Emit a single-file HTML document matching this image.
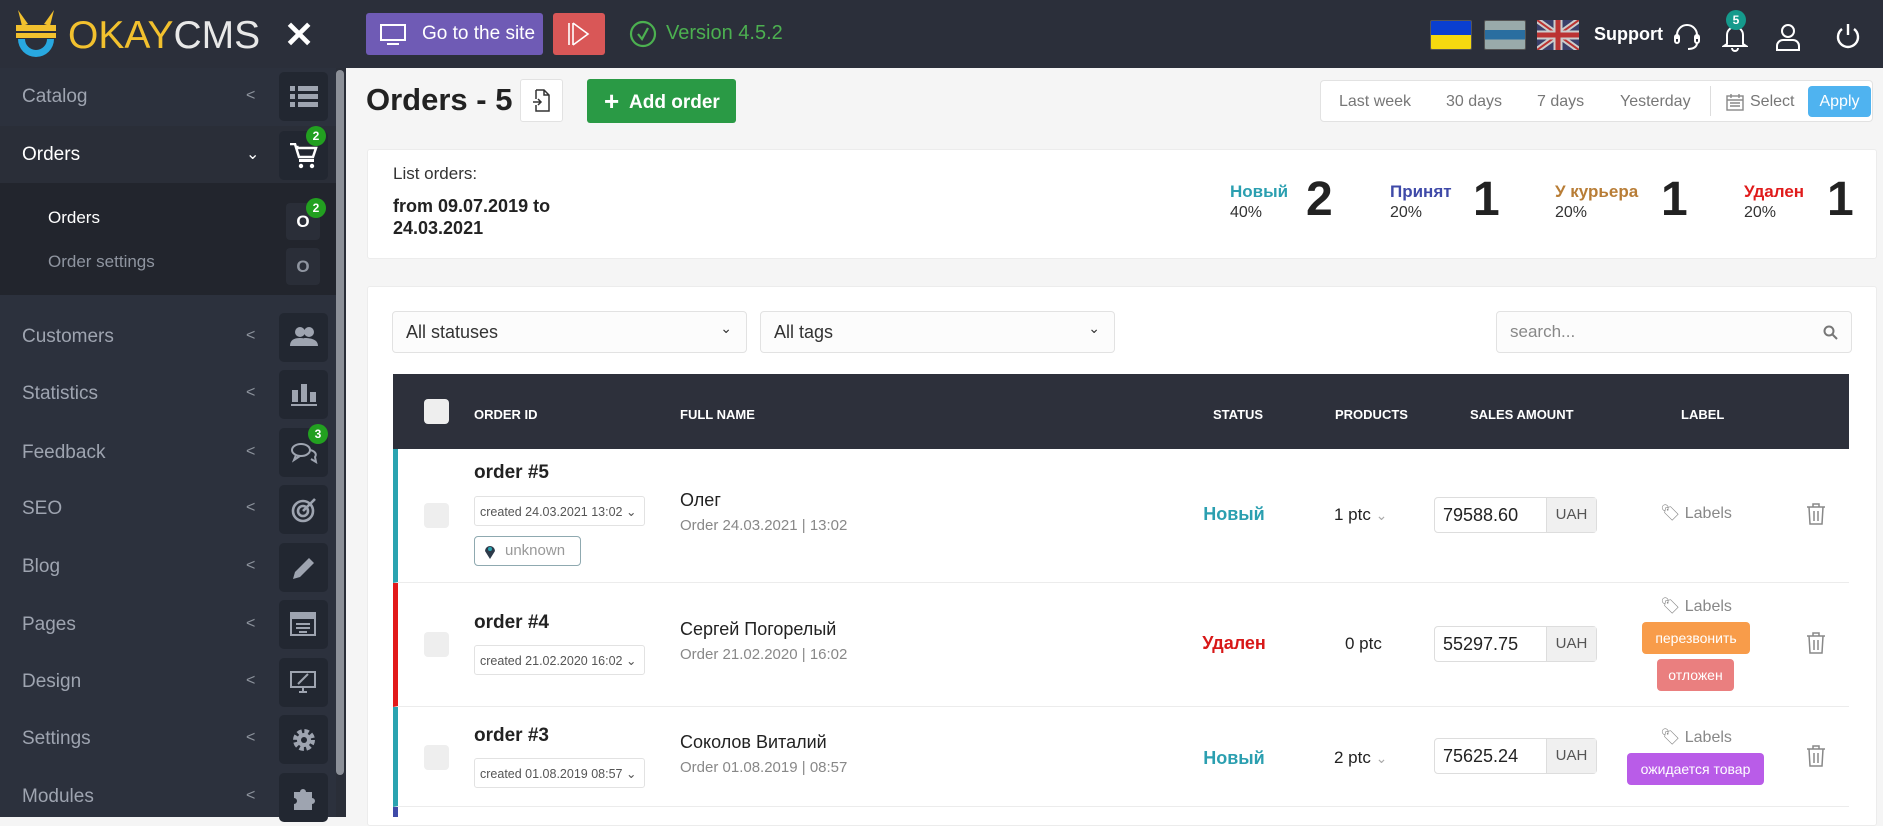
<!DOCTYPE html>
<html><head><meta charset="utf-8"><style>
*{box-sizing:border-box;margin:0;padding:0}
body{width:1883px;height:817px;overflow:hidden;background:#f5f5f5;font-family:"Liberation Sans","Noto Sans CJK SC",sans-serif;position:relative;color:#222}
.a{position:absolute}
.hdr{left:0;top:0;width:1883px;height:68px;background:#2b2f3a}
.sb{left:0;top:68px;width:346px;height:749px;background:#2c313d}
.nav{position:absolute;left:22px;font-size:19px;color:#9ea4b0}
.chev{position:absolute;left:246px;color:#8c929c;font-size:16px}
.ib{position:absolute;left:279px;width:49px;height:49px;background:#222731;border-radius:5px}
.badge{position:absolute;width:20px;height:20px;border-radius:50%;background:#22a020;color:#fff;font-size:12px;font-weight:bold;text-align:center;line-height:20px}
.card{background:#fff;border:1px solid #ececec;border-radius:3px}
.sel{background:#fcfcfc;border:1px solid #e2e2e2;border-radius:4px;font-size:18px;color:#333;padding:10px 13px}
.th{position:absolute;top:407px;color:#fff;font-size:13px;font-weight:bold;font-family:"Liberation Sans Narrow","Liberation Sans",sans-serif}
.ord{font-size:19px;font-weight:bold;color:#222}
.cr{width:171px;height:30px;border:1px solid #e2e2e2;border-radius:3px;font-size:12.5px;color:#555;padding:7px 5px;font-family:"Liberation Sans Narrow","Liberation Sans",sans-serif}
.nm{font-size:18px;color:#222}
.sub{font-size:15px;color:#888}
.st{font-size:18px;font-weight:bold;text-align:center;width:120px}
.amt{width:163px;height:36px;border:1px solid #ddd;border-radius:4px;background:#fff;font-size:18px;color:#222;padding:7px 8px}
.amt span{position:absolute;right:0;top:0;width:50px;height:34px;background:#f0f0f0;border-left:1px solid #ddd;font-size:15px;color:#555;text-align:center;line-height:34px}
.lbl{font-size:16px;color:#888}
.tag{color:#fff;font-size:14px;border-radius:4px;text-align:center;line-height:32px;height:32px}
.row{left:393px;width:1456px;background:#fff;border-bottom:1px solid #ececec}
</style></head><body>
<div class="a hdr"></div>
<svg class="a" style="left:14px;top:8px" width="44" height="52" viewBox="0 0 44 52">
<path d="M4 2 L14 16 L8 18 Z M40 2 L30 16 L36 18 Z" fill="#f2c12e"/>
<rect x="2" y="17" width="40" height="6" fill="#f2c12e"/>
<rect x="2" y="25" width="40" height="5" fill="#f2c12e"/>
<path d="M4 31 A18 18 0 1 0 40 31 L33 31 A11 11 0 1 1 11 31 Z" fill="#28a8e0"/>
</svg>
<div class="a" style="left:68px;top:14px;font-size:39px;color:#f2c12e;font-weight:300">OKAY<span style="color:#e8e8e8">CMS</span></div>
<div class="a" style="left:284px;top:14px;font-size:36px;color:#fff;font-weight:bold">✕</div>
<div class="a" style="left:366px;top:13px;width:177px;height:42px;background:#6f5bb5;border-radius:3px;color:#fff;font-size:19px;line-height:42px;padding-left:56px">Go to the site</div>
<svg class="a" style="left:380px;top:24px" width="26" height="22" viewBox="0 0 26 22"><rect x="1" y="1" width="24" height="15" fill="none" stroke="#fff" stroke-width="2"/><path d="M7 20h12" stroke="#fff" stroke-width="2"/></svg>
<div class="a" style="left:553px;top:13px;width:52px;height:42px;background:#d95757;border-radius:3px"></div>
<svg class="a" style="left:566px;top:21px" width="26" height="26" viewBox="0 0 26 26"><path d="M3 2v22M7 2v22M7 2l15 11L7 24" fill="none" stroke="#fff" stroke-width="1.6"/></svg>
<svg class="a" style="left:629px;top:20px" width="28" height="28" viewBox="0 0 28 28"><circle cx="14" cy="14" r="12" fill="none" stroke="#4cb050" stroke-width="2.2"/><path d="M9 14l4 5 6-11" fill="none" stroke="#4cb050" stroke-width="2.2"/></svg>
<div class="a" style="left:666px;top:22px;font-size:20px;color:#4cb050">Version 4.5.2</div>
<div class="a" style="left:1430px;top:20px;width:42px;height:30px;border:1px solid #555;border-radius:2px;background:linear-gradient(#0a3fd0 50%,#f5d90f 50%)"></div>
<div class="a" style="left:1484px;top:20px;width:42px;height:30px;border:1px solid #555;border-radius:2px;background:linear-gradient(#9aa 0,#9aa 33%,#2a6ea0 33%,#2a6ea0 66%,#9aa 66%)"></div>
<svg class="a" style="left:1537px;top:20px" width="42" height="30" viewBox="0 0 42 30"><rect width="42" height="30" fill="#3a3f6a"/><path d="M0 0L42 30M42 0L0 30" stroke="#ccc" stroke-width="6"/><path d="M0 0L42 30M42 0L0 30" stroke="#b33" stroke-width="2"/><path d="M21 0v30M0 15h42" stroke="#ccc" stroke-width="9"/><path d="M21 0v30M0 15h42" stroke="#b33" stroke-width="5"/></svg>
<div class="a" style="left:1594px;top:24px;font-size:18px;color:#fff;font-weight:bold">Support</div>
<svg class="a" style="left:1672px;top:22px" width="30" height="30" viewBox="0 0 30 30" fill="none" stroke="#fff" stroke-width="2"><path d="M5 17V13a10 10 0 0 1 20 0v4"/><rect x="3" y="13" width="4" height="8" rx="2"/><rect x="23" y="13" width="4" height="8" rx="2"/><path d="M25 21c0 4-4 6-9 6"/></svg>
<svg class="a" style="left:1722px;top:22px" width="26" height="30" viewBox="0 0 26 30" fill="none" stroke="#fff" stroke-width="2"><path d="M5 22V13a8 8 0 0 1 16 0v9l3 2H2z"/><path d="M10 26a3 3 0 0 0 6 0"/></svg>
<div class="badge" style="left:1726px;top:10px;background:#159a8c">5</div>
<svg class="a" style="left:1774px;top:22px" width="28" height="30" viewBox="0 0 28 30" fill="none" stroke="#fff" stroke-width="2"><circle cx="14" cy="9" r="6"/><path d="M3 28v-4a6 6 0 0 1 6-6h10a6 6 0 0 1 6 6v4z"/></svg>
<svg class="a" style="left:1834px;top:22px" width="28" height="28" viewBox="0 0 28 28" fill="none" stroke="#fff" stroke-width="2.4"><path d="M8 7a10 10 0 1 0 12 0"/><path d="M14 2v11"/></svg>

<div class="a sb"></div>
<div class="a" style="left:0;top:126px;width:336px;height:57px;background:#2a2e38"></div>
<div class="a" style="left:0;top:183px;width:336px;height:112px;background:#22252d"></div>
<div class="a" style="left:336px;top:68px;width:10px;height:749px;background:#2a2e38"></div>
<div class="a" style="left:336px;top:70px;width:8px;height:705px;background:#8c9098;border-radius:4px"></div>

<div class="nav" style="top:86px">Catalog</div><div class="chev" style="top:87px">&lt;</div>
<div class="ib" style="top:72px"></div>
<svg class="a" style="left:290px;top:86px" width="28" height="22" viewBox="0 0 28 22" fill="#9ea4b0"><rect x="0" y="0" width="5" height="5"/><rect x="8" y="0" width="20" height="5"/><rect x="0" y="8" width="5" height="5"/><rect x="8" y="8" width="20" height="5"/><rect x="0" y="16" width="5" height="5"/><rect x="8" y="16" width="20" height="5"/></svg>

<div class="nav" style="top:144px;color:#fff">Orders</div><div class="chev" style="top:144px;color:#fff">⌄</div>
<div class="ib" style="top:131px"></div>
<svg class="a" style="left:290px;top:143px" width="28" height="26" viewBox="0 0 28 26" fill="#fff"><path d="M0 1h5l4 13h14l3-9H8l-1-2" stroke="#fff" stroke-width="2.5" fill="none"/><rect x="9" y="16" width="15" height="3"/><circle cx="11" cy="23" r="2.2"/><circle cx="22" cy="23" r="2.2"/></svg>
<div class="badge" style="left:306px;top:126px">2</div>

<div class="nav" style="top:208px;left:48px;color:#fff;font-size:17px">Orders</div>
<div class="a" style="left:286px;top:203px;width:34px;height:37px;background:#2a2e38;border-radius:4px;color:#fff;font-weight:bold;font-size:17px;text-align:center;line-height:37px">O</div>
<div class="badge" style="left:306px;top:198px">2</div>
<div class="nav" style="top:252px;left:48px;font-size:17px;color:#8f95a0">Order settings</div>
<div class="a" style="left:286px;top:248px;width:34px;height:37px;background:#2a2e38;border-radius:4px;color:#8f95a0;font-weight:bold;font-size:17px;text-align:center;line-height:37px">O</div>

<div class="nav" style="top:326px">Customers</div><div class="chev" style="top:327px">&lt;</div><div class="ib" style="top:313px"></div>
<svg class="a" style="left:290px;top:326px" width="28" height="22" viewBox="0 0 28 22" fill="#9ea4b0"><circle cx="10" cy="6" r="5"/><circle cx="19" cy="6" r="5"/><path d="M0 20c0-6 4-8 10-8s10 2 10 8zM14 12c6 0 14 1 14 8h-8z"/></svg>
<div class="nav" style="top:383px">Statistics</div><div class="chev" style="top:384px">&lt;</div><div class="ib" style="top:370px"></div>
<svg class="a" style="left:291px;top:382px" width="26" height="24" viewBox="0 0 26 24" fill="#9ea4b0"><rect x="1" y="8" width="6" height="12"/><rect x="10" y="2" width="6" height="18"/><rect x="19" y="10" width="6" height="10"/><rect x="0" y="22" width="26" height="2"/></svg>
<div class="nav" style="top:442px">Feedback</div><div class="chev" style="top:443px">&lt;</div><div class="ib" style="top:428px"></div>
<svg class="a" style="left:290px;top:442px" width="28" height="22" viewBox="0 0 28 22" fill="none" stroke="#9ea4b0" stroke-width="2"><ellipse cx="11" cy="8" rx="9" ry="6"/><path d="M6 13l-2 5 6-4M20 8c5 1 7 4 5 7l1 5-5-3"/></svg>
<div class="badge" style="left:308px;top:424px">3</div>
<div class="nav" style="top:498px">SEO</div><div class="chev" style="top:499px">&lt;</div><div class="ib" style="top:485px"></div>
<svg class="a" style="left:290px;top:497px" width="28" height="26" viewBox="0 0 28 26" fill="none" stroke="#9ea4b0" stroke-width="2.6"><circle cx="13" cy="14" r="10"/><circle cx="13" cy="14" r="5"/><path d="M13 14L25 2"/></svg>
<div class="nav" style="top:556px">Blog</div><div class="chev" style="top:557px">&lt;</div><div class="ib" style="top:543px"></div>
<svg class="a" style="left:291px;top:555px" width="26" height="26" viewBox="0 0 26 26" fill="#9ea4b0"><path d="M2 24l2-7L18 3l5 5L9 22z"/></svg>
<div class="nav" style="top:614px">Pages</div><div class="chev" style="top:615px">&lt;</div><div class="ib" style="top:600px"></div>
<svg class="a" style="left:290px;top:612px" width="26" height="24" viewBox="0 0 26 24" fill="none" stroke="#9ea4b0" stroke-width="2"><rect x="1" y="1" width="24" height="22"/><rect x="1" y="1" width="24" height="5" fill="#9ea4b0"/><path d="M6 12h14M6 16h14M9 20h8"/></svg>
<div class="nav" style="top:671px">Design</div><div class="chev" style="top:672px">&lt;</div><div class="ib" style="top:658px"></div>
<svg class="a" style="left:290px;top:670px" width="26" height="24" viewBox="0 0 26 24" fill="none" stroke="#9ea4b0" stroke-width="2"><rect x="1" y="2" width="24" height="15"/><path d="M9 22h8M13 17v5M8 14l10-10" /></svg>
<div class="nav" style="top:728px">Settings</div><div class="chev" style="top:729px">&lt;</div><div class="ib" style="top:715px"></div>
<svg class="a" style="left:291px;top:727px" width="26" height="26" viewBox="0 0 26 26"><circle cx="13" cy="13" r="8" fill="none" stroke="#9ea4b0" stroke-width="6" stroke-dasharray="4 2.3"/><circle cx="13" cy="13" r="7" fill="#9ea4b0"/><circle cx="13" cy="13" r="3" fill="#222731"/></svg>
<div class="nav" style="top:786px">Modules</div><div class="chev" style="top:787px">&lt;</div><div class="ib" style="top:773px"></div>
<svg class="a" style="left:291px;top:785px" width="26" height="26" viewBox="0 0 26 26" fill="#9ea4b0"><path d="M3 7h6a3 3 0 1 1 6 0h6v6a3 3 0 1 1 0 6v6H3v-6a3 3 0 1 0 0-6z"/></svg>

<div class="a" style="left:366px;top:82px;font-size:31px;font-weight:bold;color:#222;font-family:'Liberation Sans Narrow','Liberation Sans',sans-serif">Orders - 5</div>
<div class="a" style="left:520px;top:79px;width:43px;height:43px;background:#fff;border:1px solid #e2e2e2;border-radius:3px"></div>
<svg class="a" style="left:532px;top:89px" width="20" height="24" viewBox="0 0 20 24" fill="none" stroke="#333" stroke-width="1.5"><path d="M4 1h8l5 5v16H4v-6M4 10V1M12 1v5h5M1 13h8M6 10l3 3-3 3"/></svg>
<div class="a" style="left:587px;top:79px;width:149px;height:44px;background:#2a9a45;border-radius:3px;color:#fff;font-weight:bold;font-size:19px;line-height:44px;padding-left:17px"><span style="font-size:26px;vertical-align:-2px">+</span>&nbsp; Add order</div>

<div class="a" style="left:1320px;top:80px;width:553px;height:42px;background:#fff;border:1px solid #e2e2e2;border-radius:4px"></div>
<div class="a" style="left:1339px;top:93px;font-size:16px;color:#777">Last week</div>
<div class="a" style="left:1446px;top:93px;font-size:16px;color:#777">30 days</div>
<div class="a" style="left:1537px;top:93px;font-size:16px;color:#777">7 days</div>
<div class="a" style="left:1620px;top:93px;font-size:16px;color:#777">Yesterday</div>
<div class="a" style="left:1710px;top:86px;width:1px;height:30px;background:#ddd"></div>
<svg class="a" style="left:1726px;top:93px" width="18" height="18" viewBox="0 0 18 18" fill="none" stroke="#888" stroke-width="1.4"><rect x="1" y="3" width="16" height="14"/><path d="M1 7h16M5 1v4M13 1v4M4 10h10M4 13h10"/></svg>
<div class="a" style="left:1750px;top:93px;font-size:16px;color:#777">Select</div>
<div class="a" style="left:1808px;top:86px;width:63px;height:31px;background:#4fb3f0;border-radius:4px;color:#fff;font-size:16px;text-align:center;line-height:31px">Apply</div>

<div class="a card" style="left:367px;top:149px;width:1510px;height:110px"></div>
<div class="a" style="left:393px;top:164px;font-size:17px;color:#333">List orders:</div>
<div class="a" style="left:393px;top:195px;font-size:18px;font-weight:bold;color:#222;line-height:22px">from 09.07.2019 to<br>24.03.2021</div>
<div class="a" style="left:1230px;top:182px;font-size:17px;font-weight:bold;color:#2b9fb0">Новый</div>
<div class="a" style="left:1230px;top:204px;font-size:16px;color:#333">40%</div>
<div class="a" style="left:1306px;top:176px;font-size:48px;font-weight:bold;color:#222;line-height:1">2</div>
<div class="a" style="left:1390px;top:182px;font-size:17px;font-weight:bold;color:#3f4aa8">Принят</div>
<div class="a" style="left:1390px;top:204px;font-size:16px;color:#333">20%</div>
<div class="a" style="left:1473px;top:176px;font-size:48px;font-weight:bold;color:#222;line-height:1">1</div>
<div class="a" style="left:1555px;top:182px;font-size:17px;font-weight:bold;color:#b87d36">У курьера</div>
<div class="a" style="left:1555px;top:204px;font-size:16px;color:#333">20%</div>
<div class="a" style="left:1661px;top:176px;font-size:48px;font-weight:bold;color:#222;line-height:1">1</div>
<div class="a" style="left:1744px;top:182px;font-size:17px;font-weight:bold;color:#e01b1b">Удален</div>
<div class="a" style="left:1744px;top:204px;font-size:16px;color:#333">20%</div>
<div class="a" style="left:1827px;top:176px;font-size:48px;font-weight:bold;color:#222;line-height:1">1</div>

<div class="a card" style="left:367px;top:286px;width:1510px;height:540px"></div>
<div class="a sel" style="left:392px;top:311px;width:355px;height:42px">All statuses<span style="position:absolute;right:14px;top:8px;font-size:14px">⌄</span></div>
<div class="a sel" style="left:760px;top:311px;width:355px;height:42px">All tags<span style="position:absolute;right:14px;top:8px;font-size:14px">⌄</span></div>
<div class="a sel" style="left:1496px;top:311px;width:356px;height:42px;color:#888;font-size:17px">search...</div>
<svg class="a" style="left:1823px;top:325px" width="15" height="15" viewBox="0 0 15 15" fill="none" stroke="#777" stroke-width="2"><circle cx="6" cy="6" r="4.5"/><path d="M9.5 9.5L14 14"/></svg>

<div class="a" style="left:393px;top:374px;width:1456px;height:75px;background:#2d303b"></div>
<div class="a" style="left:424px;top:399px;width:25px;height:25px;background:#eee;border-radius:4px"></div>
<div class="th" style="left:474px">ORDER ID</div>
<div class="th" style="left:680px">FULL NAME</div>
<div class="th" style="left:1213px">STATUS</div>
<div class="th" style="left:1335px">PRODUCTS</div>
<div class="th" style="left:1470px">SALES AMOUNT</div>
<div class="th" style="left:1681px">LABEL</div>

<div class="a row" style="top:449px;height:134px;border-left:5px solid #2aa3b0"></div>
<div class="a" style="left:424px;top:503px;width:25px;height:25px;background:#eee;border-radius:4px"></div>
<div class="a ord" style="left:474px;top:462px">order #5</div>
<div class="a cr" style="left:474px;top:496px">created 24.03.2021 13:02 ⌄</div>
<div class="a" style="left:474px;top:536px;width:107px;height:30px;border:1px solid #8fa9b0;border-radius:4px;font-size:15px;color:#999;padding:5px 0 0 30px">unknown</div>
<svg class="a" style="left:484px;top:543px" width="12" height="16" viewBox="0 0 12 16"><path d="M6 16L1 8a5 5 0 1 1 10 0z" fill="#2d3a4a"/><circle cx="6" cy="6" r="2" fill="#2aa3b0"/></svg>
<div class="a nm" style="left:680px;top:490px">Олег</div>
<div class="a sub" style="left:680px;top:517px">Order 24.03.2021 | 13:02</div>
<div class="a st" style="left:1174px;top:504px;color:#2b9fb0">Новый</div>
<div class="a" style="left:1334px;top:505px;font-size:17px;color:#222">1 ptc <span style="color:#aaa;font-size:14px">⌄</span></div>
<div class="a amt" style="left:1434px;top:497px">79588.60<span>UAH</span></div>
<div class="a lbl" style="left:1660px;top:503px">🏷︎ Labels</div>
<svg class="a" style="left:1806px;top:503px" width="20" height="22" viewBox="0 0 20 22" fill="none" stroke="#888" stroke-width="1.5"><path d="M1 4h18M7 4V1h6v3M3 4l1 17h12l1-17M8 8v10M12 8v10"/></svg>

<div class="a row" style="top:583px;height:124px;border-left:5px solid #e21a1a"></div>
<div class="a" style="left:424px;top:632px;width:25px;height:25px;background:#eee;border-radius:4px"></div>
<div class="a ord" style="left:474px;top:612px">order #4</div>
<div class="a cr" style="left:474px;top:645px">created 21.02.2020 16:02 ⌄</div>
<div class="a nm" style="left:680px;top:619px">Сергей Погорелый</div>
<div class="a sub" style="left:680px;top:646px">Order 21.02.2020 | 16:02</div>
<div class="a st" style="left:1174px;top:633px;color:#d81818">Удален</div>
<div class="a" style="left:1345px;top:634px;font-size:17px;color:#222">0 ptc</div>
<div class="a amt" style="left:1434px;top:626px">55297.75<span>UAH</span></div>
<div class="a lbl" style="left:1660px;top:596px">🏷︎ Labels</div>
<div class="a tag" style="left:1642px;top:622px;width:108px;background:#f89c4a">перезвонить</div>
<div class="a tag" style="left:1657px;top:659px;width:77px;background:#ea7f7f">отложен</div>
<svg class="a" style="left:1806px;top:632px" width="20" height="22" viewBox="0 0 20 22" fill="none" stroke="#888" stroke-width="1.5"><path d="M1 4h18M7 4V1h6v3M3 4l1 17h12l1-17M8 8v10M12 8v10"/></svg>

<div class="a row" style="top:707px;height:100px;border-left:5px solid #2aa3b0"></div>
<div class="a" style="left:424px;top:745px;width:25px;height:25px;background:#eee;border-radius:4px"></div>
<div class="a ord" style="left:474px;top:725px">order #3</div>
<div class="a cr" style="left:474px;top:758px">created 01.08.2019 08:57 ⌄</div>
<div class="a nm" style="left:680px;top:732px">Соколов Виталий</div>
<div class="a sub" style="left:680px;top:759px">Order 01.08.2019 | 08:57</div>
<div class="a st" style="left:1174px;top:748px;color:#2b9fb0">Новый</div>
<div class="a" style="left:1334px;top:748px;font-size:17px;color:#222">2 ptc <span style="color:#aaa;font-size:14px">⌄</span></div>
<div class="a amt" style="left:1434px;top:738px">75625.24<span>UAH</span></div>
<div class="a lbl" style="left:1660px;top:727px">🏷︎ Labels</div>
<div class="a tag" style="left:1627px;top:753px;width:137px;background:#b95ce8">ожидается товар</div>
<svg class="a" style="left:1806px;top:745px" width="20" height="22" viewBox="0 0 20 22" fill="none" stroke="#888" stroke-width="1.5"><path d="M1 4h18M7 4V1h6v3M3 4l1 17h12l1-17M8 8v10M12 8v10"/></svg>
<div class="a" style="left:393px;top:807px;width:1456px;height:10px;background:#fff;border-left:5px solid #3f4aa8"></div>
</body></html>
